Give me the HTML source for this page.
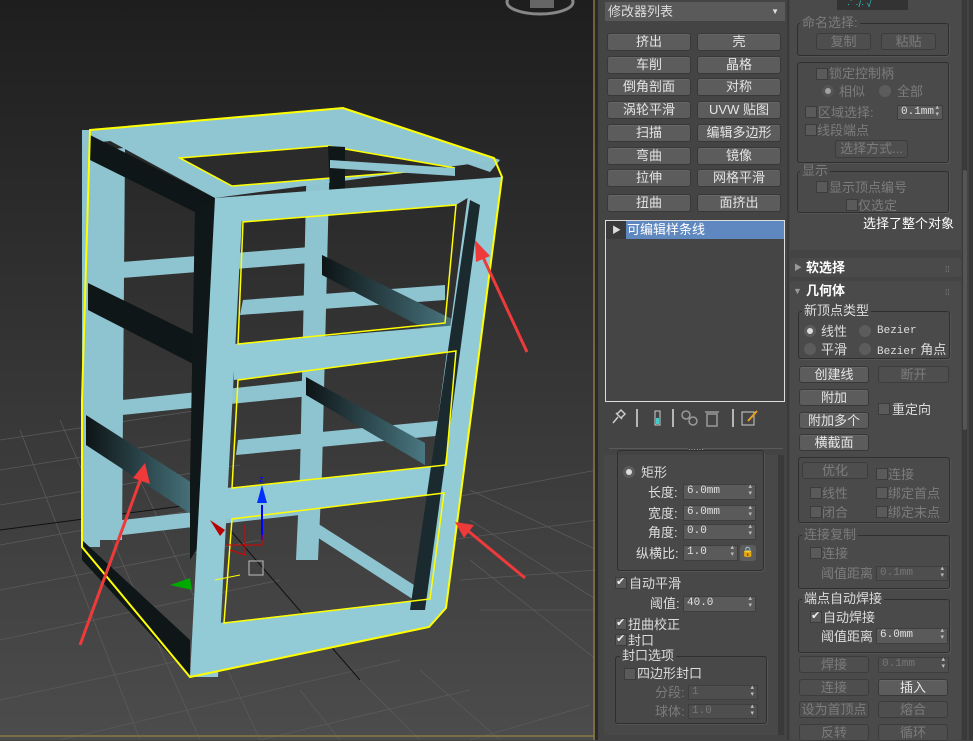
<!DOCTYPE html>
<html><head><meta charset="utf-8"><style>
*{margin:0;padding:0;box-sizing:border-box}
body{width:973px;height:740px;overflow:hidden;background:#444;font-family:"Liberation Sans","Noto Sans CJK SC",sans-serif;font-size:13px;color:#ddd;position:relative}
.a{position:absolute;white-space:nowrap;line-height:15px}
.b{position:absolute;background:#5c5c5c;border:1px solid #383838;border-radius:3px;color:#e4e4e4;text-align:center;font-size:13px;line-height:15px;box-shadow:inset 0 1px 0 #666}
.d{background:#4e4e4e;color:#7c7c7c;box-shadow:none;border-color:#3c3c3c}
.g{position:absolute;border:1px solid #2f2f2f;border-radius:3px;box-shadow:1px 1px 0 #555}
.gl{position:absolute;background:#4a4a4a;padding:0 2px;font-size:13px;line-height:14px}
.cb{position:absolute;width:12px;height:12px;background:#5a5a5a;border:1px solid #3c3c3c}
.cb.k::after{content:"✔";position:absolute;left:0;top:-2px;font-size:11px;line-height:13px;color:#eee}
.rd{position:absolute;width:12px;height:12px;border-radius:50%;background:#5c5c5c}
.rd.on::after{content:"";position:absolute;left:3px;top:3px;width:6px;height:6px;border-radius:50%;background:#ddd}
.sp{position:absolute;background:#5a5a5a;border:1px solid #3e3e3e;font-family:"Liberation Mono",monospace;font-size:11px;color:#e0e0e0;line-height:13px;padding-left:3px}
.sp::after{content:"▴\A▾";white-space:pre;position:absolute;right:3px;top:-1px;font-size:7px;line-height:7px;color:#bbb}
.sp.d{background:#4e4e4e;color:#777}
.dis{color:#7c7c7c}
</style></head><body>
<svg class="a" style="left:0;top:0;line-height:0" width="597" height="740" viewBox="0 0 597 740">
<defs>
<linearGradient id="bg" x1="0" y1="0" x2="0" y2="1"><stop offset="0" stop-color="#1e1e1e"/><stop offset="0.45" stop-color="#333"/><stop offset="1" stop-color="#4c4c4c"/></linearGradient>
<linearGradient id="dk" x1="0" y1="0" x2="1" y2="0"><stop offset="0" stop-color="#0d1416"/><stop offset="1" stop-color="#4a7882"/></linearGradient>
</defs>
<rect width="597" height="740" fill="url(#bg)"/>
<g stroke="#5a5a5a" stroke-width="0.8" fill="none">
<path d="M0 440 L200 410 M0 470 L220 435 M0 505 L240 465 M0 545 L250 500 M0 590 L260 540 M0 640 L280 580 M0 700 L320 630 M60 740 L400 660 M260 740 L470 690 M470 740 L590 705 M440 500 L597 470 M450 540 L597 520 M460 580 L597 570 M480 610 L597 610"/>
<path d="M20 430 L140 740 M60 420 L200 740 M110 415 L260 740 M300 690 L340 740 M360 680 L420 740 M420 670 L500 740 M470 560 L597 660 M470 520 L597 600 M470 490 L597 550"/>
</g>
<path d="M0 530 L190 505" stroke="#111" stroke-width="1"/>
<path d="M230 530 L360 680" stroke="#111" stroke-width="1"/>
<ellipse cx="540" cy="2" rx="33" ry="12" fill="none" stroke="#888" stroke-width="3"/>
<rect x="530" y="0" width="24" height="8" fill="#666"/>
<g fill="#8ec4cf">
<polygon points="90,130 343,108 340,120 100,142"/>
<polygon points="343,108 500,160 490,172 340,120"/>
<polygon points="307,146 330,146 322,472 300,472"/>
<polygon points="300,472 322,472 318,560 296,560"/>
<polygon points="100,150 125,148 122,540 98,540"/>
<polygon points="122,262 322,246 322,262 122,278"/>
<polygon points="122,400 310,380 310,396 122,415"/>
<polygon points="306,516 414,585 414,600 306,530"/>
<polygon points="122,520 300,500 300,515 122,535"/>
<polygon points="243,300 445,285 445,300 240,315"/>
<polygon points="238,440 446,420 446,435 236,455"/>
</g>
<polygon points="322,255 456,321 456,345 322,275" fill="url(#dk)"/>
<polygon points="306,377 425,443 425,465 306,395" fill="url(#dk)"/>
<polygon points="330,146 343,108 343,160 330,160" fill="#0f1719"/>
<polygon points="82,130 100,130 100,547 82,547" fill="#8ec4cf"/>
<polygon points="90,135 215,198 215,222 90,160" fill="#0e1618"/>
<polygon points="88,283 205,340 205,370 88,310" fill="#0e1618"/>
<polygon points="86,415 200,488 200,520 86,445" fill="url(#dk)"/>
<polygon points="82,540 190,640 190,677 82,560" fill="#0e1618"/>
<polygon points="195,210 215,198 215,520 190,560 190,480" fill="#0f1719"/>
<polygon points="90,130 343,108 500,160 215,198" fill="#8fc6d2"/>
<polygon points="180,158 328,146 455,168 232,186" fill="#2b2b2b" stroke="#ff0" stroke-width="1.5"/>
<polygon points="328,146 345,147 345,190 330,190" fill="#0f1719"/>
<polygon points="330,160 455,168 455,176 330,168" fill="#8ec4cf"/>
<g fill="#92cad6">
<polygon points="215,198 502,177 456,205 243,222"/>
<polygon points="215,198 243,198 218,677 190,677"/>
<polygon points="470,180 502,177 446,608 429,627 410,627"/>
<polygon points="234,344 483,323 456,351 234,380"/>
<polygon points="226,488 446,465 444,493 226,519"/>
<polygon points="218,623 429,599 429,627 190,677"/>
</g>
<polygon points="470,200 480,205 425,610 410,610" fill="#1a2a2e"/>
<g fill="none" stroke="#ff0" stroke-width="1.5">
<polygon points="243,222 456,205 445,323 238,344"/>
<polygon points="238,380 456,351 446,465 232,488"/>
<polygon points="232,519 444,493 430,599 224,623"/>
<polygon points="90,130 343,108 494,158 502,177 446,608 429,627 190,677 82,547 82,400" stroke-width="2"/>
</g>
<path d="M262 505 L262 540" stroke="#00f" stroke-width="2"/><polygon points="257,503 267,503 262,485" fill="#0030ff"/>
<text x="259" y="482" fill="#00f" font-size="9" font-family="Liberation Sans">z</text>
<polygon points="210,520 225,530 220,536" fill="#b00"/>
<path d="M225 545 L262 545 L262 535 M230 550 L245 555 L245 525" stroke="#d00" stroke-width="1" fill="none"/>
<path d="M215 580 L240 575" stroke="#ff0"/>
<polygon points="170,585 190,578 192,590" fill="#0a0"/>
<rect x="249" y="561" width="14" height="14" fill="none" stroke="#aaa" stroke-width="1.2"/>
<g stroke="#ee3a3a" stroke-width="3" fill="#ee3a3a">
<line x1="527" y1="352" x2="482" y2="255"/><polygon points="475,240 490,256 476,262" stroke="none"/>
<line x1="80" y1="645" x2="141" y2="478"/><polygon points="145,463 150,484 133,478" stroke="none"/>
<line x1="525" y1="578" x2="467" y2="530"/><polygon points="455,522 474,525 464,538" stroke="none"/>
</g>
<line x1="594" y1="0" x2="594" y2="740" stroke="#8a7840" stroke-width="1.5"/>
<line x1="0" y1="736" x2="594" y2="736" stroke="#8a7840" stroke-width="1.5"/>
</svg>
<div class="a" style="left:595px;top:0;width:3px;height:740px;background:#2a2a2a"></div>

<div class="a" style="left:605px;top:2px;width:180px;height:19px;background:#5a5a5a;padding-left:3px;line-height:19px">修改器列表<span style="position:absolute;right:6px;font-size:8px">▼</span></div>
<div class="b" style="left:607px;top:33px;width:84px;height:18px">挤出</div><div class="b" style="left:697px;top:33px;width:84px;height:18px">壳</div>
<div class="b" style="left:607px;top:56px;width:84px;height:18px">车削</div><div class="b" style="left:697px;top:56px;width:84px;height:18px">晶格</div>
<div class="b" style="left:607px;top:78px;width:84px;height:18px">倒角剖面</div><div class="b" style="left:697px;top:78px;width:84px;height:18px">对称</div>
<div class="b" style="left:607px;top:101px;width:84px;height:18px">涡轮平滑</div><div class="b" style="left:697px;top:101px;width:84px;height:18px">UVW 贴图</div>
<div class="b" style="left:607px;top:124px;width:84px;height:18px">扫描</div><div class="b" style="left:697px;top:124px;width:84px;height:18px">编辑多边形</div>
<div class="b" style="left:607px;top:147px;width:84px;height:18px">弯曲</div><div class="b" style="left:697px;top:147px;width:84px;height:18px">镜像</div>
<div class="b" style="left:607px;top:169px;width:84px;height:18px">拉伸</div><div class="b" style="left:697px;top:169px;width:84px;height:18px">网格平滑</div>
<div class="b" style="left:607px;top:194px;width:84px;height:18px">扭曲</div><div class="b" style="left:697px;top:194px;width:84px;height:18px">面挤出</div>
<div class="a" style="left:605px;top:220px;width:180px;height:182px;border:1px solid #ddd;background:#454545"></div>
<div class="a" style="left:606px;top:221px;width:20px;height:18px;background:#3a3a3a;font-size:9px;color:#ddd;padding:2px 0 0 6px">▶</div>
<div class="a" style="left:626px;top:221px;width:158px;height:18px;background:#5e88bf;color:#fff;line-height:18px;padding-left:1px">可编辑样条线</div>
<svg class="a" style="left:605px;top:405px" width="160" height="24">
<path d="M8 18 L13 12 M11 8 L17 14 M12 9 L16 5 L20 9 L16 13" stroke="#ccc" stroke-width="1.5" fill="none"/>
<line x1="32" y1="4" x2="32" y2="22" stroke="#ddd" stroke-width="1.5"/>
<rect x="50" y="6" width="5" height="14" fill="none" stroke="#ccc"/><rect x="51" y="13" width="3" height="6" fill="#4cc"/>
<line x1="68" y1="4" x2="68" y2="22" stroke="#ddd" stroke-width="1.5"/>
<circle cx="81" cy="10" r="4" fill="none" stroke="#999" stroke-width="1.5"/><circle cx="88" cy="16" r="4" fill="none" stroke="#999" stroke-width="1.5"/>
<rect x="102" y="9" width="10" height="12" fill="none" stroke="#999" stroke-width="1.5"/><line x1="100" y1="7" x2="114" y2="7" stroke="#999" stroke-width="1.5"/>
<line x1="128" y1="4" x2="128" y2="22" stroke="#ddd" stroke-width="1.5"/>
<rect x="137" y="7" width="12" height="13" fill="none" stroke="#ccc"/><path d="M143 16 L152 6" stroke="#e8a020" stroke-width="2"/>
</svg>
<div class="a" style="left:609px;top:448px;width:174px;height:1px;background:#5a5a5a"></div>
<div class="a" style="left:688px;top:442px;width:14px;font-size:8px;color:#bbb;background:#444">······</div>
<div class="a" style="left:604px;top:455px;width:175px;height:280px;background:#484848;border-right:1px solid #3a3a3a"></div>
<div class="a" style="left:779px;top:455px;width:5px;height:280px;background:#3a3a3a"></div>
<div class="g" style="left:617px;top:450px;width:147px;height:121px"></div>
<div class="rd on" style="left:623px;top:466px"></div><div class="a" style="left:641px;top:465px">矩形</div>
<div class="a" style="left:648px;top:485px">长度:</div><div class="sp" style="left:683px;top:484px;width:73px;height:16px">6.0mm</div>
<div class="a" style="left:648px;top:506px">宽度:</div><div class="sp" style="left:683px;top:505px;width:73px;height:16px">6.0mm</div>
<div class="a" style="left:648px;top:525px">角度:</div><div class="sp" style="left:683px;top:524px;width:73px;height:16px">0.0</div>
<div class="a" style="left:636px;top:546px">纵横比:</div><div class="sp" style="left:683px;top:545px;width:55px;height:16px">1.0</div>
<div class="a" style="left:740px;top:545px;width:16px;height:16px;background:#5c5c5c;border-radius:3px;color:#33c;font-size:10px;text-align:center;line-height:16px">🔒</div>
<div class="cb k" style="left:615px;top:577px"></div><div class="a" style="left:629px;top:576px">自动平滑</div>
<div class="a" style="left:650px;top:596px">阈值:</div><div class="sp" style="left:683px;top:596px;width:73px;height:16px">40.0</div>
<div class="cb k" style="left:615px;top:618px"></div><div class="a" style="left:628px;top:617px">扭曲校正</div>
<div class="cb k" style="left:615px;top:634px"></div><div class="a" style="left:628px;top:633px">封口</div>
<div class="g" style="left:615px;top:656px;width:152px;height:68px"></div>
<div class="gl" style="left:620px;top:649px;background:#484848">封口选项</div>
<div class="cb" style="left:624px;top:668px"></div><div class="a" style="left:637px;top:666px">四边形封口</div>
<div class="a dis" style="left:655px;top:685px">分段:</div><div class="sp d" style="left:688px;top:685px;width:70px;height:15px">1</div>
<div class="a dis" style="left:655px;top:704px">球体:</div><div class="sp d" style="left:688px;top:704px;width:70px;height:15px">1.0</div>

<div class="a" style="left:787px;top:0;width:2px;height:740px;background:#3a3a3a"></div>
<div class="a" style="left:962px;top:0;width:5px;height:740px;background:#3a3a3a"></div>
<div class="a" style="left:963px;top:170px;width:4px;height:260px;background:#555;border-radius:2px"></div>
<div class="a" style="left:969px;top:0;width:4px;height:740px;background:#383838"></div>
<div class="a" style="left:790px;top:0;width:171px;height:250px;background:#4a4a4a"></div>
<div class="a" style="left:837px;top:0;width:71px;height:10px;background:#333;color:#3cc;font-size:9px;line-height:8px;padding-left:10px">·˙ ·/· √</div>
<div class="g" style="left:797px;top:23px;width:152px;height:33px"></div>
<div class="gl dis" style="left:800px;top:16px">命名选择:</div>
<div class="b d" style="left:816px;top:33px;width:55px;height:17px">复制</div>
<div class="b d" style="left:881px;top:33px;width:55px;height:17px">粘贴</div>
<div class="g" style="left:797px;top:62px;width:152px;height:101px"></div>
<div class="cb" style="left:816px;top:68px"></div><div class="a dis" style="left:829px;top:66px">锁定控制柄</div>
<div class="rd on" style="left:822px;top:85px;opacity:.6"></div><div class="a dis" style="left:839px;top:84px">相似</div>
<div class="rd" style="left:879px;top:85px"></div><div class="a dis" style="left:897px;top:84px">全部</div>
<div class="cb" style="left:805px;top:106px"></div><div class="a dis" style="left:818px;top:105px">区域选择:</div>
<div class="sp" style="left:897px;top:105px;width:46px;height:15px">0.1mm</div>
<div class="cb" style="left:805px;top:124px"></div><div class="a dis" style="left:817px;top:123px">线段端点</div>
<div class="b d" style="left:835px;top:140px;width:73px;height:18px">选择方式...</div>
<div class="g" style="left:797px;top:171px;width:152px;height:42px"></div>
<div class="gl dis" style="left:800px;top:164px">显示</div>
<div class="cb" style="left:816px;top:181px"></div><div class="a dis" style="left:829px;top:180px">显示顶点编号</div>
<div class="cb" style="left:846px;top:199px"></div><div class="a dis" style="left:858px;top:198px">仅选定</div>
<div class="a" style="left:863px;top:216px;color:#fff">选择了整个对象</div>
<div class="a" style="left:790px;top:258px;width:171px;height:19px;background:#4a4a4a;border-radius:3px"></div>
<div class="a" style="left:794px;top:260px;font-size:8px;color:#999">▶</div>
<div class="a" style="left:806px;top:260px;font-weight:bold;color:#fff">软选择</div>
<div class="a" style="left:945px;top:262px;font-size:8px;color:#888">⁞⁞</div>
<div class="a" style="left:790px;top:281px;width:171px;height:459px;background:#4a4a4a;border-radius:3px"></div>
<div class="a" style="left:793px;top:284px;font-size:9px;color:#999">▼</div>
<div class="a" style="left:806px;top:283px;font-weight:bold;color:#fff">几何体</div>
<div class="a" style="left:945px;top:285px;font-size:8px;color:#888">⁞⁞</div>
<div class="g" style="left:798px;top:311px;width:152px;height:48px"></div>
<div class="gl" style="left:802px;top:304px">新顶点类型</div>
<div class="rd on" style="left:804px;top:325px"></div><div class="a" style="left:821px;top:324px">线性</div>
<div class="rd" style="left:859px;top:325px"></div><div class="a" style="left:877px;top:324px;font-family:'Liberation Mono',monospace;font-size:11px">Bezier</div>
<div class="rd" style="left:804px;top:343px"></div><div class="a" style="left:821px;top:342px">平滑</div>
<div class="rd" style="left:859px;top:343px"></div><div class="a" style="left:877px;top:342px"><span style="font-family:'Liberation Mono',monospace;font-size:11px">Bezier</span> 角点</div>
<div class="b" style="left:799px;top:366px;width:70px;height:17px">创建线</div>
<div class="b d" style="left:878px;top:366px;width:71px;height:17px">断开</div>
<div class="b" style="left:799px;top:389px;width:70px;height:17px">附加</div>
<div class="cb" style="left:878px;top:403px"></div><div class="a" style="left:892px;top:402px">重定向</div>
<div class="b" style="left:799px;top:412px;width:70px;height:17px">附加多个</div>
<div class="b" style="left:799px;top:434px;width:70px;height:17px">横截面</div>
<div class="g" style="left:798px;top:457px;width:152px;height:66px"></div>
<div class="b d" style="left:802px;top:462px;width:66px;height:17px">优化</div>
<div class="cb" style="left:876px;top:468px"></div><div class="a dis" style="left:888px;top:467px">连接</div>
<div class="cb" style="left:810px;top:487px"></div><div class="a dis" style="left:822px;top:486px">线性</div>
<div class="cb" style="left:876px;top:487px"></div><div class="a dis" style="left:888px;top:486px">绑定首点</div>
<div class="cb" style="left:810px;top:506px"></div><div class="a dis" style="left:822px;top:505px">闭合</div>
<div class="cb" style="left:876px;top:506px"></div><div class="a dis" style="left:888px;top:505px">绑定末点</div>
<div class="g" style="left:798px;top:535px;width:152px;height:54px"></div>
<div class="gl dis" style="left:802px;top:528px">连接复制</div>
<div class="cb" style="left:810px;top:547px"></div><div class="a dis" style="left:822px;top:546px">连接</div>
<div class="a dis" style="left:821px;top:566px">阈值距离</div><div class="sp d" style="left:876px;top:566px;width:72px;height:15px">0.1mm</div>
<div class="g" style="left:798px;top:599px;width:152px;height:54px"></div>
<div class="gl" style="left:802px;top:592px">端点自动焊接</div>
<div class="cb k" style="left:810px;top:611px"></div><div class="a" style="left:823px;top:610px">自动焊接</div>
<div class="a" style="left:821px;top:629px">阈值距离</div><div class="sp" style="left:876px;top:628px;width:72px;height:16px">6.0mm</div>
<div class="b d" style="left:799px;top:656px;width:70px;height:17px">焊接</div>
<div class="sp d" style="left:878px;top:657px;width:71px;height:16px">0.1mm</div>
<div class="b d" style="left:799px;top:679px;width:70px;height:17px">连接</div>
<div class="b" style="left:878px;top:679px;width:70px;height:17px">插入</div>
<div class="b d" style="left:799px;top:701px;width:70px;height:17px">设为首顶点</div>
<div class="b d" style="left:878px;top:701px;width:70px;height:17px">熔合</div>
<div class="b d" style="left:799px;top:724px;width:70px;height:17px">反转</div>
<div class="b d" style="left:878px;top:724px;width:70px;height:17px">循环</div>
</body></html>
